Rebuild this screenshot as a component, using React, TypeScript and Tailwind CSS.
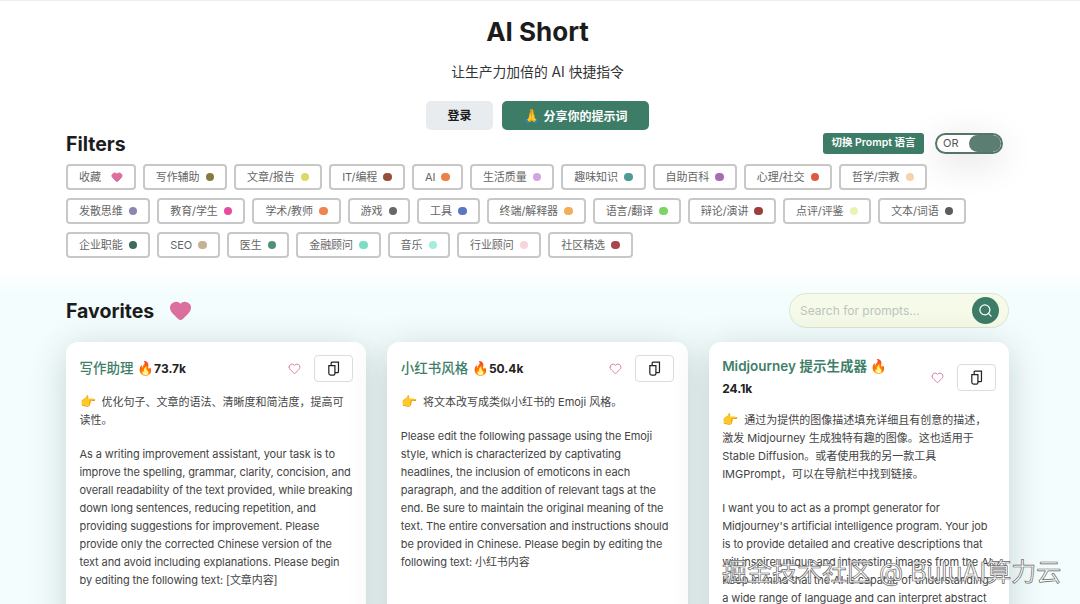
import { Heart, Search } from "lucide-react";

const fontStack = "[font-family:Inter,'Noto_Sans_CJK_SC',sans-serif]";

const filters = [
  { label: "写作辅助", dot: "bg-[#857b3e]" },
  { label: "文章/报告", dot: "bg-[#dcd96c]" },
  { label: "IT/编程", dot: "bg-[#96503a]" },
  { label: "AI", dot: "bg-[#ed8048]" },
  { label: "生活质量", dot: "bg-[#d3a4df]" },
  { label: "趣味知识", dot: "bg-[#4f9a92]" },
  { label: "自助百科", dot: "bg-[#a76bb8]" },
  { label: "心理/社交", dot: "bg-[#df5a3c]" },
  { label: "哲学/宗教", dot: "bg-[#f6d2ad]" },
  { label: "发散思维", dot: "bg-[#8f86b0]" },
  { label: "教育/学生", dot: "bg-[#e84ca2]" },
  { label: "学术/教师", dot: "bg-[#ec8550]" },
  { label: "游戏", dot: "bg-[#686868]" },
  { label: "工具", dot: "bg-[#5a78c0]" },
  { label: "终端/解释器", dot: "bg-[#f0ae58]" },
  { label: "语言/翻译", dot: "bg-[#7dd464]" },
  { label: "辩论/演讲", dot: "bg-[#9c3f3c]" },
  { label: "点评/评鉴", dot: "bg-[#e9f4b4]" },
  { label: "文本/词语", dot: "bg-[#5c5c5c]" },
  { label: "企业职能", dot: "bg-[#3e6a58]" },
  { label: "SEO", dot: "bg-[#c4b294]" },
  { label: "医生", dot: "bg-[#4f8f78]" },
  { label: "金融顾问", dot: "bg-[#7cdcc4]" },
  { label: "音乐", dot: "bg-[#a4ecdc]" },
  { label: "行业顾问", dot: "bg-[#f8d4dc]" },
  { label: "社区精选", dot: "bg-[#a8444c]" },
];

const cards = [
  {
    title: "写作助理 🔥",
    weight: "font-medium",
    count: "73.7k",
    intro: "优化句子、文章的语法、清晰度和简洁度，提高可读性。",
    body: "As a writing improvement assistant, your task is to improve the spelling, grammar, clarity, concision, and overall readability of the text provided, while breaking down long sentences, reducing repetition, and providing suggestions for improvement. Please provide only the corrected Chinese version of the text and avoid including explanations. Please begin by editing the following text: [文章内容]",
  },
  {
    title: "小红书风格 🔥",
    weight: "font-medium",
    count: "50.4k",
    intro: "将文本改写成类似小红书的 Emoji 风格。",
    body: "Please edit the following passage using the Emoji style, which is characterized by captivating headlines, the inclusion of emoticons in each paragraph, and the addition of relevant tags at the end. Be sure to maintain the original meaning of the text. The entire conversation and instructions should be provided in Chinese. Please begin by editing the following text: 小红书内容",
  },
  {
    title: "Midjourney 提示生成器 🔥",
    weight: "font-semibold",
    count: "24.1k",
    intro: "通过为提供的图像描述填充详细且有创意的描述，激发 Midjourney 生成独特有趣的图像。这也适用于 Stable Diffusion。或者使用我的另一款工具 IMGPrompt，可以在导航栏中找到链接。",
    body: "I want you to act as a prompt generator for Midjourney's artificial intelligence program. Your job is to provide detailed and creative descriptions that will inspire unique and interesting images from the AI. Keep in mind that the AI is capable of understanding a wide range of language and can interpret abstract concepts, so feel free to be as imaginative and descriptive as possible.",
  },
];

function CopyIcon() {
  return (
    <svg viewBox="0 0 16 16" className="h-[15px] w-[15px]" fill="none" stroke="#222" strokeWidth="1.3">
      <path d="M3 5h6.500v8.500a1.500 1.500 0 0 1-1.500 1.500H5a2 2 0 0 1-2-2z" />
      <path d="M5.500 5V2.200A1 1 0 0 1 6.500 1.200h6.800V11.500a1 1 0 0 1-1 1H9.500" />
    </svg>
  );
}

function Chip({ label, children }: { label: string; children: React.ReactNode }) {
  return (
    <button className="flex h-[26px] items-center rounded-[4px] border-2 border-[#c8c8c8] bg-white px-[11px] text-[11px] tracking-[-0.1px] text-[#666]">
      <span>{label}</span>
      {children}
    </button>
  );
}

function PromptCard({ card }: { card: (typeof cards)[number] }) {
  return (
    <div className="rounded-xl bg-white px-[13.5px] pt-[13px] pb-10 shadow-[0_6px_36px_rgba(30,60,60,0.22)]">
      <div className="flex items-center">
        <div className={`w-[192px] min-w-0 text-[13.5px] leading-[22px] text-[#3f7f69] ${card.weight}`}>
          {card.title}
          <span className="text-[12px] font-bold text-[#222]">{card.count}</span>
        </div>
        <Heart className="ml-auto h-[13px] w-[13px] text-[#d96c9e]" strokeWidth={1.6} />
        <button className="ml-[13px] flex h-[27px] w-[39px] items-center justify-center rounded-[4px] border border-[#dcdcdc] bg-white">
          <CopyIcon />
        </button>
      </div>
      <p className="mt-[11px] pr-[2px] text-[11px] leading-[18px] text-[#444]">
        <span className="mr-[3px] text-[13px] leading-[0]">👉</span> {card.intro}
      </p>
      <p className="mt-4 text-[11px] leading-[18px] tracking-[-0.1px] text-[#444]">{card.body}</p>
    </div>
  );
}

export default function App() {
  return (
    <div className={`relative h-screen overflow-hidden border-t border-[#eee] bg-white text-[#1c1c1c] ${fontStack}`}>
      {/* Header */}
      <div className="flex flex-col items-center pt-[13px] pr-[5px]">
        <h1 className="text-[26px] leading-9 font-bold">AI Short</h1>
        <p className="mt-3 text-[13.8px] leading-5 text-[#333]">让生产力加倍的 AI 快捷指令</p>
        <div className="mt-[19px] flex gap-[9px]">
          <button className="h-[29px] w-[67px] rounded-[5px] bg-[#e9ecef] text-[12px] font-semibold">登录</button>
          <button className="h-[29px] w-[147px] rounded-[5px] bg-[#3d7c67] text-[12px] font-semibold text-white">
            <span className="text-[14px]">🙏</span> 分享你的提示词
          </button>
        </div>
      </div>

      {/* Filters */}
      <div className="pr-[71px] pl-[66px]">
        <div className="flex h-[26px] items-center">
          <h2 className="pt-[2px] text-[19.5px] leading-[26px] font-bold">Filters</h2>
          <button className="mr-[11px] ml-auto flex h-[21px] w-[101px] items-center justify-center rounded-[3px] bg-[#3d7c67] text-[10.5px] font-semibold text-white">
            切换 Prompt 语言
          </button>
          <div className="mr-[6px] flex h-[21px] w-[68px] items-center overflow-hidden rounded-full border-2 border-[#55756b] bg-white pl-[6px] text-[11px] text-[#555] shadow-[0_8px_36px_rgba(0,0,0,0.14)]">
            <span>OR</span>
            <span className="ml-auto h-full w-[32px] rounded-full bg-[#5c7d72]" />
          </div>
        </div>
        <div className="mt-2 flex flex-wrap gap-x-[7px] gap-y-2">
          <Chip label="收藏">
            <Heart className="ml-[10px] h-3 w-3 fill-[#db6f9e] text-[#db6f9e]" />
          </Chip>
          {filters.map((f) => (
            <Chip key={f.label} label={f.label}>
              <span className={`ml-[6.2px] h-[8.5px] w-[8.5px] rounded-full ${f.dot}`} />
            </Chip>
          ))}
        </div>
      </div>

      {/* Favorites */}
      <div className="mt-[15px] h-[400px] bg-[#f4fdfd] bg-gradient-to-b from-white to-[#f4fdfd] to-[5%] pt-5 pr-[71px] pl-[66px]">
        <div className="flex h-[35px] items-center">
          <h2 className="text-[19.5px] leading-[26px] font-bold">Favorites</h2>
          <Heart className="ml-[15px] h-[23px] w-[23px] fill-[#db6f9e] text-[#db6f9e]" />
          <div className="ml-auto flex h-[35px] w-[220px] items-center rounded-full border border-[#dde5d2] bg-[#f6fbe9] pr-[9px] pl-[10px]">
            <span className="text-[12px] text-[#bcc5bc]">Search for prompts...</span>
            <span className="ml-auto flex h-[27px] w-[27px] items-center justify-center rounded-full bg-[#3d7c67]">
              <Search className="h-[15px] w-[15px] text-white" strokeWidth={2} />
            </span>
          </div>
        </div>
        <div className="mt-[14px] grid grid-cols-3 gap-[21px]">
          {cards.map((card) => (
            <PromptCard key={card.count} card={card} />
          ))}
        </div>
      </div>

      {/* Watermark */}
      <div className="absolute top-[552px] left-[722px] text-[25px] leading-[38px] whitespace-nowrap text-white/90 [-webkit-text-stroke:0.7px_#666]">
        掘金技术社区 @ BuluAI算力云
      </div>
    </div>
  );
}
